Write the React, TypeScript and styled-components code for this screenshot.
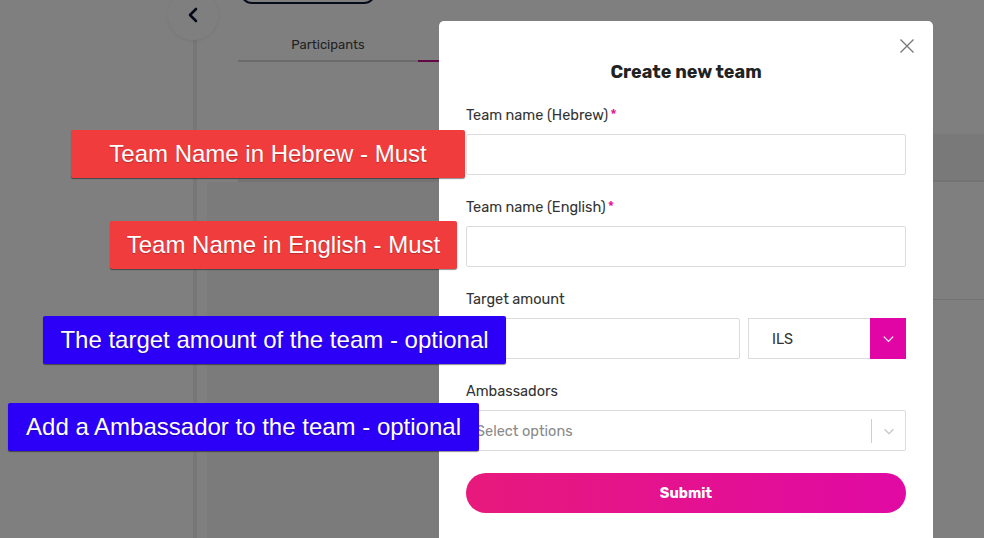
import React from "react";
import styled, { createGlobalStyle } from "styled-components";

const GlobalStyle = createGlobalStyle`
  html, body { margin: 0; padding: 0; background: #ffffff; }
  body { overflow: hidden; font-family: "Rubik", "Inter", "Noto Sans", sans-serif; }
  * { box-sizing: border-box; }
`;

const Page = styled.div`
  position: relative;
  width: 984px;
  height: 538px;
  overflow: hidden;
  display: flex;
  background: #ffffff;
`;

const Sidebar = styled.aside`
  width: 197px;
  flex: none;
  background: #ffffff;
  border-right: 4px solid #eeeeee;
`;

const BackButton = styled.div`
  position: absolute;
  left: 168px;
  top: -10px;
  width: 50px;
  height: 50px;
  border-radius: 50%;
  background: #ffffff;
  box-shadow: 0 1px 4px rgba(0, 0, 0, 0.08);
  display: flex;
  align-items: center;
  justify-content: center;
  color: #0d1733;
`;

const Main = styled.main`
  flex: 1;
  display: flex;
  flex-direction: column;
  padding-left: 41px;
`;

const OutlineButton = styled.div`
  width: 136px;
  height: 24px;
  margin-top: -20px;
  margin-left: 2px;
  border: 2px solid #0d1733;
  border-radius: 12px;
`;

const Tabs = styled.div`
  display: flex;
  margin-top: 31px;
`;

const Tab = styled.div<{ $active?: boolean }>`
  width: 180px;
  height: 27px;
  text-align: center;
  font-size: 13px;
  line-height: 20px;
  color: #444;
  border-bottom: 2px solid ${(p) => (p.$active ? "#c0138a" : "#d6d6d6")};
  font-family: "Rubik", "Inter", "Noto Sans", sans-serif;
`;

const TableHead = styled.div`
  margin-top: 72px;
  height: 48px;
  background: #f3f3f3;
  border-bottom: 2px solid #e6e6e6;
`;

const CardArea = styled.div`
  display: flex;
  flex: 1;
  margin-left: -31px;
`;

const Card = styled.div`
  width: 240px;
  background: #f6f6f6;
`;

const CardRight = styled.div`
  flex: 1;
  height: 118px;
  border-bottom: 1px solid #e4e4e4;
`;

const Overlay = styled.div`
  position: absolute;
  inset: 0;
  background: rgba(0, 0, 0, 0.5);
`;

const Modal = styled.div`
  position: absolute;
  left: 439px;
  top: 21px;
  width: 494px;
  height: 540px;
  background: #ffffff;
  border-radius: 5px;
  padding: 40px 27px 0;
  display: flex;
  flex-direction: column;
  gap: 22px;
`;

const CloseButton = styled.div`
  position: absolute;
  right: 18px;
  top: 17px;
  width: 16px;
  height: 16px;
  color: #777;
  display: flex;
`;

const Title = styled.h2`
  margin: 0;
  text-align: center;
  font-size: 18px;
  line-height: 22px;
  font-weight: 700;
  color: #222;
  font-family: "Rubik", "Inter", "Noto Sans", sans-serif;
`;

const Field = styled.div`
  display: flex;
  flex-direction: column;
  gap: 9px;
`;

const Label = styled.label`
  font-size: 14.5px;
  line-height: 20px;
  color: #333;
  font-family: "Rubik", "Inter", "Noto Sans", sans-serif;
`;

const Required = styled.span`
  color: #e3078f;
  margin-left: 2px;
`;

const Input = styled.div<{ $width?: number }>`
  height: 41px;
  flex: none;
  ${(p) => (p.$width ? `width: ${p.$width}px;` : "")}
  border: 1px solid #dcdcdc;
  border-radius: 2px;
  background: #fff;
`;

const Row = styled.div`
  display: flex;
  gap: 8px;
`;

const Select = styled.div`
  width: 158px;
  height: 41px;
  border: 1px solid #dcdcdc;
  border-right: none;
  display: flex;
  align-items: center;
  font-size: 14.5px;
  color: #333;
  font-family: "Rubik", "Inter", "Noto Sans", sans-serif;
`;

const SelectValue = styled.span`
  flex: 1;
  padding-left: 23px;
`;

const PinkArrow = styled.div`
  width: 36px;
  height: 41px;
  margin-top: -1px;
  margin-bottom: -1px;
  background: #e105a6;
  display: flex;
  align-items: center;
  justify-content: center;
  color: #fff;
`;

const MultiSelect = styled.div`
  height: 41px;
  border: 1px solid #dcdcdc;
  border-radius: 2px;
  display: flex;
  align-items: center;
  font-size: 14.5px;
  font-family: "Rubik", "Inter", "Noto Sans", sans-serif;
`;

const Placeholder = styled.span`
  flex: 1;
  padding-left: 9px;
  color: #8a8a8a;
`;

const Separator = styled.span`
  width: 1px;
  height: 24px;
  background: #cfcfcf;
`;

const IndicatorBox = styled.span`
  width: 33px;
  display: flex;
  justify-content: center;
  color: #c4c4c4;
`;

const SubmitButton = styled.button`
  height: 40px;
  flex: none;
  border: none;
  border-radius: 20px;
  background: linear-gradient(90deg, #e8197c 0%, #e00aa4 100%);
  color: #ffffff;
  font-weight: 700;
  font-size: 14.5px;
  font-family: "Rubik", "Inter", "Noto Sans", sans-serif;
  cursor: pointer;
`;

const Note = styled.div<{ $left: number; $top: number; $width: number; $color: string }>`
  position: absolute;
  left: ${(p) => p.$left}px;
  top: ${(p) => p.$top}px;
  width: ${(p) => p.$width}px;
  height: 48px;
  background: ${(p) => p.$color};
  border-radius: 2px;
  box-shadow: 0 1px 1px rgba(0, 0, 0, 0.45);
  color: #ffffff;
  font-family: "Liberation Sans", Arial, sans-serif;
  font-size: 24px;
  display: flex;
  align-items: center;
  justify-content: center;
  text-shadow: 0 1px 1px rgba(0, 0, 0, 0.25);
`;

const Chevron = ({ size = 14, stroke = 1.4 }: { size?: number; stroke?: number }) => (
  <svg width={size} height={size} viewBox="0 0 16 16" fill="none" stroke="currentColor" strokeWidth={stroke}>
    <path d="M3 6l5 5 5-5" />
  </svg>
);

export default function App() {
  return (
    <>
      <GlobalStyle />
      <Page>
        <Sidebar />
        <BackButton>
          <svg width="14" height="16" viewBox="0 0 14 16" fill="none" stroke="currentColor" strokeWidth="2.6" strokeLinecap="round" strokeLinejoin="round">
            <path d="M10 2L4 8l6 6" />
          </svg>
        </BackButton>
        <Main>
          <OutlineButton />
          <Tabs>
            <Tab>Participants</Tab>
            <Tab $active>Teams</Tab>
          </Tabs>
          <TableHead />
          <CardArea>
            <Card />
            <CardRight />
          </CardArea>
        </Main>
        <Overlay />
        <Modal>
          <CloseButton>
            <svg width="16" height="16" viewBox="0 0 16 16" stroke="currentColor" strokeWidth="1.3">
              <path d="M1.5 1.5l13 13M14.5 1.5l-13 13" />
            </svg>
          </CloseButton>
          <Title>Create new team</Title>
          <Field>
            <Label>
              Team name (Hebrew)<Required>*</Required>
            </Label>
            <Input />
          </Field>
          <Field>
            <Label>
              Team name (English)<Required>*</Required>
            </Label>
            <Input />
          </Field>
          <Field>
            <Label>Target amount</Label>
            <Row>
              <Input $width={274} />
              <Select>
                <SelectValue>ILS</SelectValue>
                <PinkArrow>
                  <Chevron size={15} stroke={1.3} />
                </PinkArrow>
              </Select>
            </Row>
          </Field>
          <Field>
            <Label>Ambassadors</Label>
            <MultiSelect>
              <Placeholder>Select options</Placeholder>
              <Separator />
              <IndicatorBox>
                <Chevron size={14} stroke={1.4} />
              </IndicatorBox>
            </MultiSelect>
          </Field>
          <SubmitButton>Submit</SubmitButton>
        </Modal>
        <Note $left={71} $top={130} $width={394} $color="#f03c3d">Team Name in Hebrew - Must</Note>
        <Note $left={110} $top={221} $width={347} $color="#f03c3d">Team Name in English - Must</Note>
        <Note $left={43} $top={316} $width={463} $color="#2c00f6">The target amount of the team - optional</Note>
        <Note $left={8} $top={403} $width={471} $color="#2c00f6">Add a Ambassador to the team - optional</Note>
      </Page>
    </>
  );
}
